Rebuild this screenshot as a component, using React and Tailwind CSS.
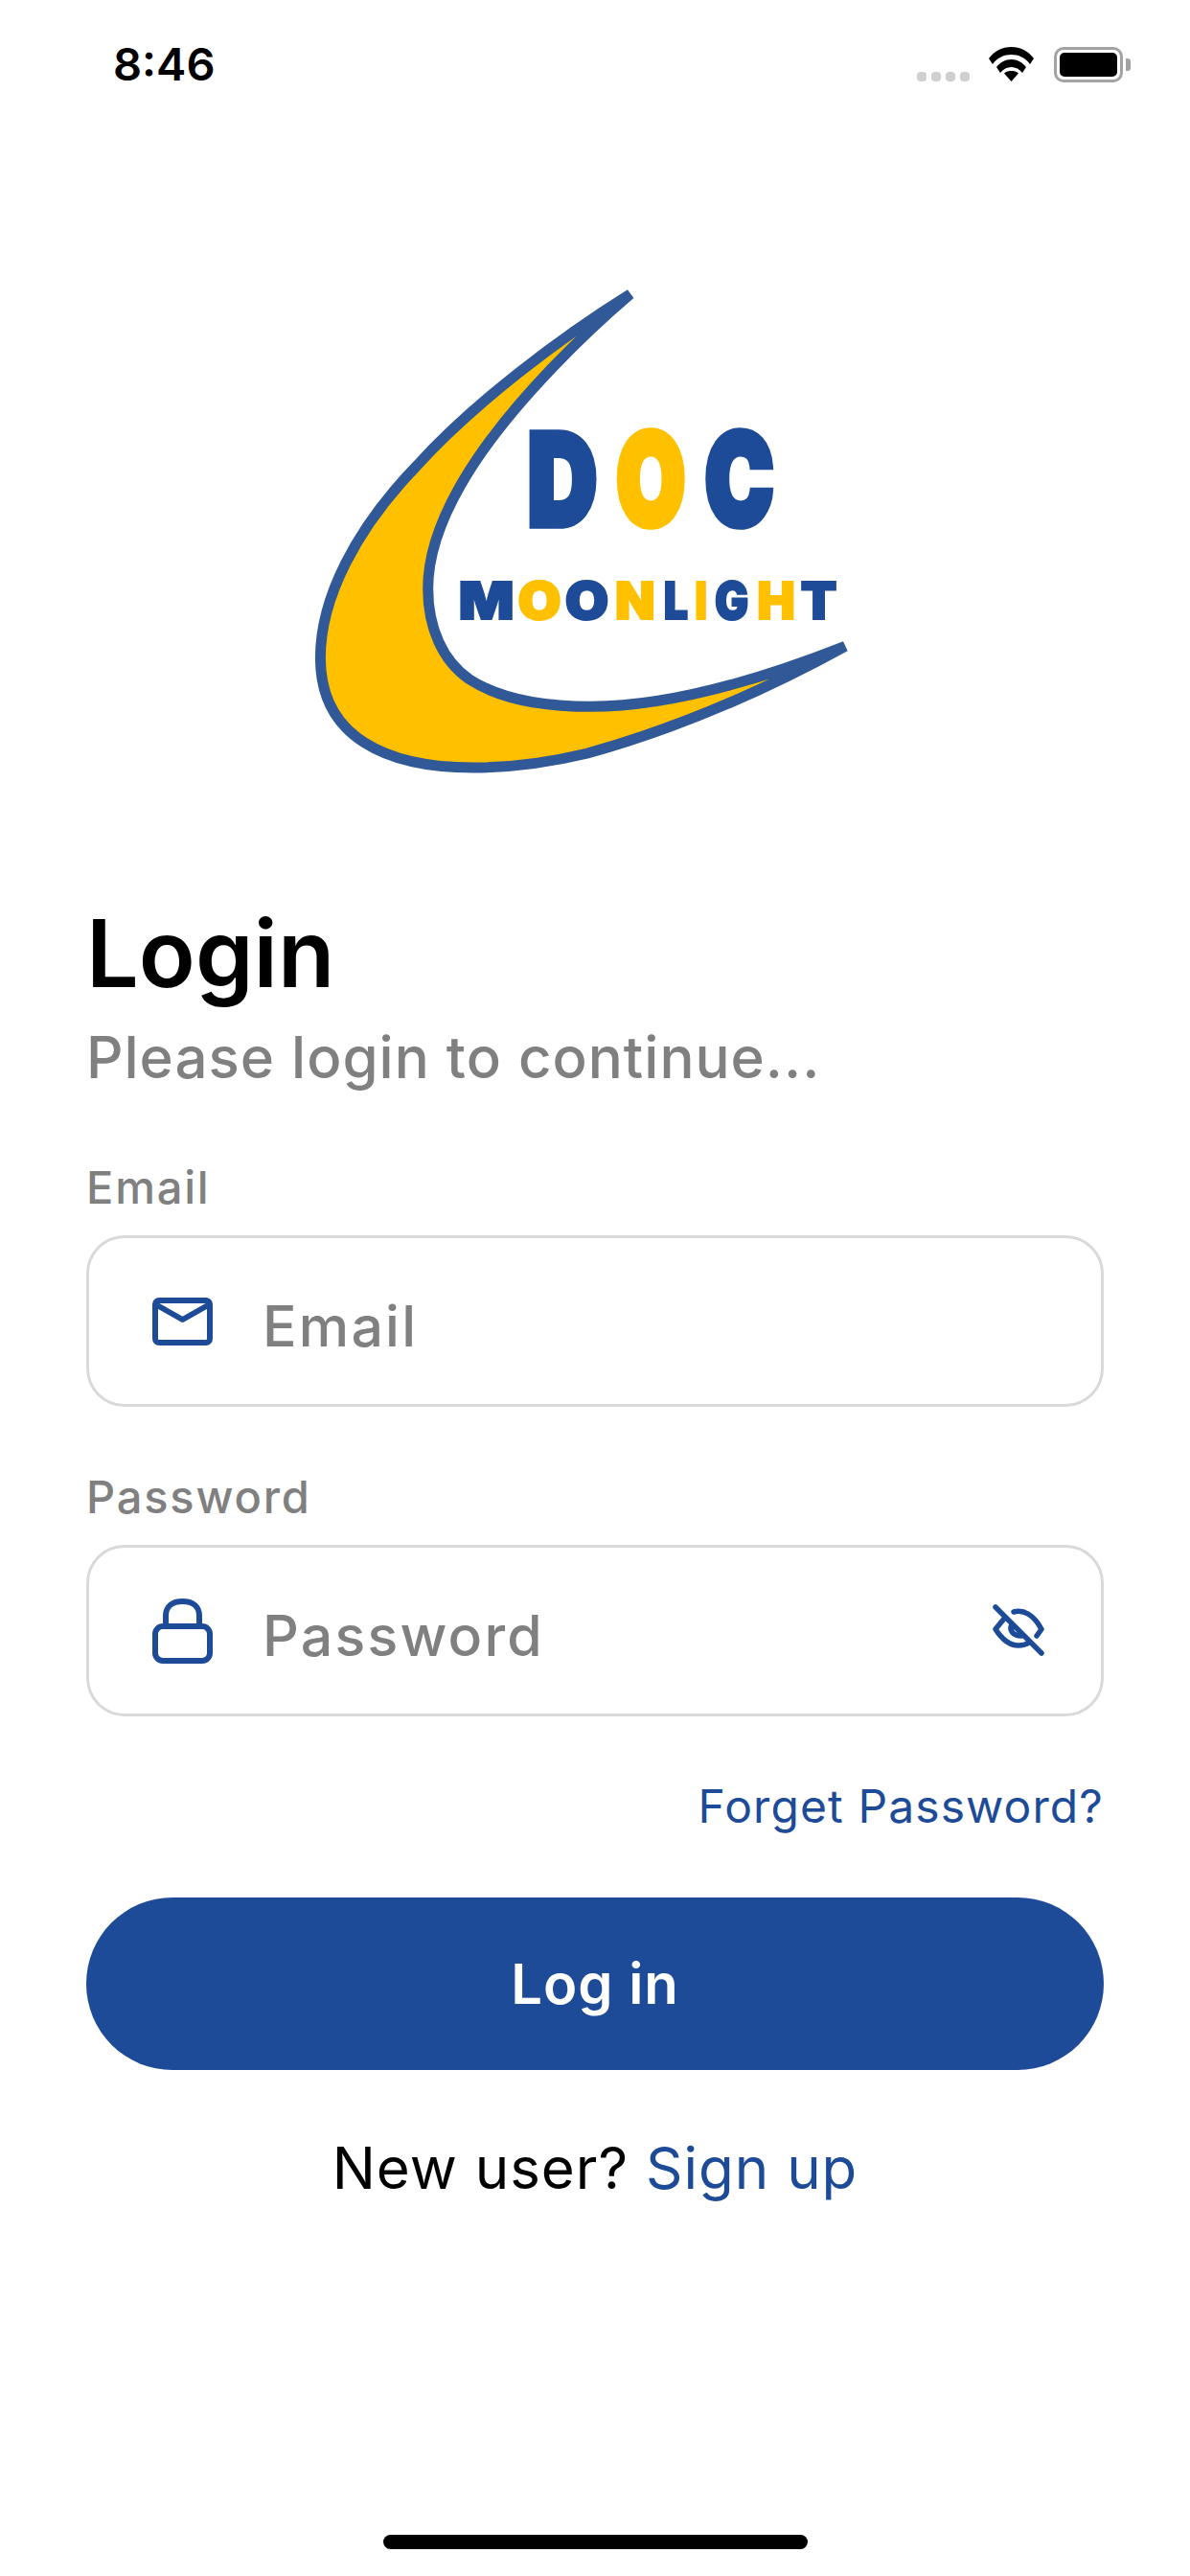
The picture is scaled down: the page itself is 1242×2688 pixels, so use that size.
import React from 'react';

const BLUE = '#1e4b98';
const YELLOW = '#ffc000';

const moonLetters = [
  ['M', 452, 146, BLUE],
  ['O', 608, 114, YELLOW],
  ['O', 733, 115, BLUE],
  ['N', 865, 105, YELLOW],
  ['L', 993, 64, BLUE],
  ['I', 1076, 32, YELLOW],
  ['G', 1128, 89, BLUE],
  ['H', 1240, 100, YELLOW],
  ['T', 1355, 95, BLUE],
];

const docLetters = [
  ['D', 634, 183, BLUE],
  ['O', 868, 182, YELLOW],
  ['C', 1102, 181, BLUE],
];

function Logo() {
  return (
    <svg viewBox="0 0 1568 1568" preserveAspectRatio="none" className="w-[620px] h-[540px] block">
      <path
        fill={YELLOW}
        stroke="#315897"
        strokeWidth="11"
        strokeLinejoin="bevel"
        vectorEffect="non-scaling-stroke"
        d="M905 78 C770 210 620 385 520 545 C430 690 371 840 371 970 C371 1090 410 1190 480 1245 C560 1305 680 1328 800 1328 C1000 1328 1240 1250 1472 1145 C1250 1285 1010 1400 790 1470 C680 1500 580 1513 490 1513 C260 1513 87 1420 87 1180 C87 1000 180 790 340 600 C490 410 720 210 905 78 Z"
      />
      {docLetters.map(([c, x, w, color], i) => (
        <text key={i} x={x} y={779} fontSize={385} textLength={w} lengthAdjust="spacingAndGlyphs" fontFamily="Inter, sans-serif" fontWeight="900" fill={color} stroke={color} strokeWidth="22">{c}</text>
      ))}
      {moonLetters.map(([c, x, w, color], i) => (
        <text key={i} x={x} y={1063} fontSize={154} textLength={w} lengthAdjust="spacingAndGlyphs" fontFamily="Inter, sans-serif" fontWeight="900" fill={color} stroke={color} strokeWidth="6">{c}</text>
      ))}
    </svg>
  );
}

function StatusBar() {
  return (
    <div className="h-[280px] pl-[118px] pr-[62px] pt-[41px] flex items-start justify-between">
      <span className="text-[47px] leading-[52px] font-semibold text-black font-['Inter',sans-serif]">8:46</span>
      <div className="flex items-start pt-[8px]">
        <div className="flex gap-[5px] mt-[26px] mr-[20px]">
          <span className="w-[10px] h-[10px] rounded-[4px] bg-[#cfcfcf]" />
          <span className="w-[10px] h-[10px] rounded-[4px] bg-[#cfcfcf]" />
          <span className="w-[10px] h-[10px] rounded-[4px] bg-[#cfcfcf]" />
          <span className="w-[10px] h-[10px] rounded-[4px] bg-[#cfcfcf]" />
        </div>
        <svg viewBox="0 0 47 36" className="w-[47px] h-[36px] mr-[21px]">
          <path fill="#000" d="M0 12 C6 4 14 0 23.5 0 C33 0 41 4 47 12 L43 18 C38 11 31 8 23.5 8 C16 8 9 11 4 18 Z" />
          <path fill="#000" d="M8 21 C12 16 17 13 23.5 13 C30 13 35 16 39 21 L35 27 C32 23 28 21 23.5 21 C19 21 15 23 12 27 Z" />
          <path fill="#000" d="M16 27.5 C18 25.5 21 25 23.5 25 C26 25 29 25.5 31 27.5 L23.5 36 Z" />
        </svg>
        <div className="w-[72px] h-[37px] border-[3px] border-[#a3a3a3] rounded-[10px] p-[3px] bg-white">
          <div className="w-full h-full bg-black rounded-[5px]" />
        </div>
        <span className="w-[5px] h-[13px] ml-[3px] mt-[12px] bg-[#a3a3a3] rounded-r-[3px]" />
      </div>
    </div>
  );
}

function Field({ label, placeholder, icon, trailing }) {
  return (
    <div>
      <div className="h-[66px] text-[47px] leading-[66px] tracking-[1.8px] text-[#808080] font-medium">{label}</div>
      <div className="mt-[17px] h-[179px] border-[3px] border-[#d9d9d9] rounded-[40px] flex items-center pl-[66px] pr-[59px]">
        <div className="w-[63px] flex justify-center">{icon}</div>
        <span className="ml-[52px] text-[59px] leading-[70px] tracking-[2.2px] font-medium text-[#808080] mt-[10px]">{placeholder}</span>
        {trailing && <div className="ml-auto">{trailing}</div>}
      </div>
    </div>
  );
}

export default function App() {
  return (
    <div className="relative w-[1242px] h-[2688px] bg-white flex flex-col font-['Inter',sans-serif]">
      <StatusBar />
      <div className="pl-[300px] h-[540px]">
        <Logo />
      </div>
      <div className="px-[90px] pt-[113px]">
        <h1 className="text-[97px] leading-[124px] font-semibold text-black">Login</h1>
        <p className="text-[60px] leading-[72px] tracking-[1px] font-medium text-[#808080] mt-[10px]">Please login to continue...</p>
        <div className="mt-[67px]">
          <Field
            label="Email"
            placeholder="Email"
            icon={
              <svg viewBox="0 0 63 50" fill="none" stroke={BLUE} strokeWidth="6" strokeLinejoin="round" className="w-[63px] h-[50px]">
                <rect x="3" y="3" width="57" height="44" rx="4" />
                <path d="M5 8 L31.5 23 L58 8" />
              </svg>
            }
          />
        </div>
        <div className="mt-[61px]">
          <Field
            label="Password"
            placeholder="Password"
            icon={
              <svg viewBox="0 0 63 68" fill="none" stroke={BLUE} strokeWidth="6" strokeLinejoin="round" className="w-[63px] h-[68px] mt-[1px]">
                <rect x="3" y="29" width="57" height="36" rx="8" />
                <path d="M14 29 V18 C14 8 21 3 31.5 3 C42 3 49 8 49 18 V29" />
              </svg>
            }
            trailing={
              <svg viewBox="0 0 54 54" fill="none" stroke={BLUE} strokeWidth="5.5" strokeLinecap="round" strokeLinejoin="round" className="w-[54px] h-[54px] -mt-[2px]">
                <path d="M3 3 L51 51" />
                <path d="M22 8 C32 5 43 11 51 26 L46 33" />
                <path d="M12 15 L3 26 C10 37 18 43 27 43 C31 43 35 42 38 40" />
                <path d="M20 21 C17 27 21 33 30 33" />
              </svg>
            }
          />
        </div>
        <div className="mt-[58px] h-[72px] text-right text-[48px] leading-[72px] tracking-[1.1px] text-[#1e4b98]">Forget Password?</div>
        <button className="mt-[59px] w-full h-[180px] rounded-[90px] bg-[#1e4b98] text-white text-[58px] tracking-[1px] font-semibold">Log in</button>
        <div className="mt-[62px] text-center text-[60px] leading-[80px] tracking-[1px] text-black">
          New user? <span className="text-[#1e4b98]">Sign up</span>
        </div>
      </div>
      <div className="mt-auto mb-[28px] self-center w-[443px] h-[15px] rounded-full bg-black" />
    </div>
  );
}
